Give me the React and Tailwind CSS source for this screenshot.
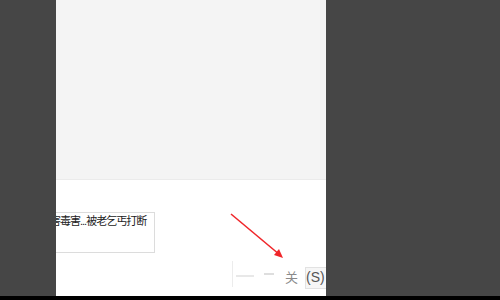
export default function App() {
  return (
    <div className="w-[500px] h-[300px] bg-[#464646] flex flex-col overflow-hidden" style={{ fontFamily: '"Noto Sans CJK SC", "Liberation Sans", sans-serif' }}>
      <div className="flex flex-1">
        <div className="w-[56px]" />
        <div className="w-[270px] flex flex-col">
          <div className="h-[180px] bg-[#f4f4f4] border-b border-[#ebebeb]" />
          <div className="flex-1 bg-white relative">
            <div className="mt-[32px] w-[99px] h-[41px] border border-l-0 border-[#dcdcdc] overflow-hidden">
              <div className="whitespace-nowrap text-[11px] leading-[13px] tracking-[-1px] text-[#222] mt-[1px] ml-[-6px]">
                害毒害<span style={{ fontFamily: '"Liberation Sans", sans-serif' }}>...</span>被老乞丐打断
              </div>
            </div>
            <svg className="absolute left-[174px] top-[33px]" width="60" height="50" viewBox="0 0 60 50">
              <line x1="1" y1="1" x2="50" y2="42" stroke="#f0262a" strokeWidth="1.6" />
              <polygon points="53,45 44,42 49,36" fill="#f0262a" />
            </svg>
            <div className="absolute left-[176px] top-[81px] w-[1px] h-[26px] bg-[#ececec]" />
            <div className="absolute left-[180px] top-[95px] w-[18px] h-[2px] bg-[#e8e8e8]" />
            <div className="absolute left-[208px] top-[93px] w-[10px] h-[2px] bg-[#dedede]" />
            <div className="absolute left-[249px] top-[87px] w-[21px] h-[22px] bg-[#f6f6f6] border border-r-0 border-[#e2e2e2]" />
            <div className="absolute left-[229px] top-[89px] text-[13px] leading-[16px] text-[#8a8a8a] whitespace-nowrap">关</div>
            <div className="absolute left-[250px] top-[89px] text-[14px] leading-[16px] text-[#555] whitespace-nowrap" style={{ fontFamily: '"Liberation Sans", sans-serif' }}>(S)</div>
          </div>
        </div>
        <div className="flex-1" />
      </div>
      <div className="h-[4px] bg-black" />
    </div>
  );
}
